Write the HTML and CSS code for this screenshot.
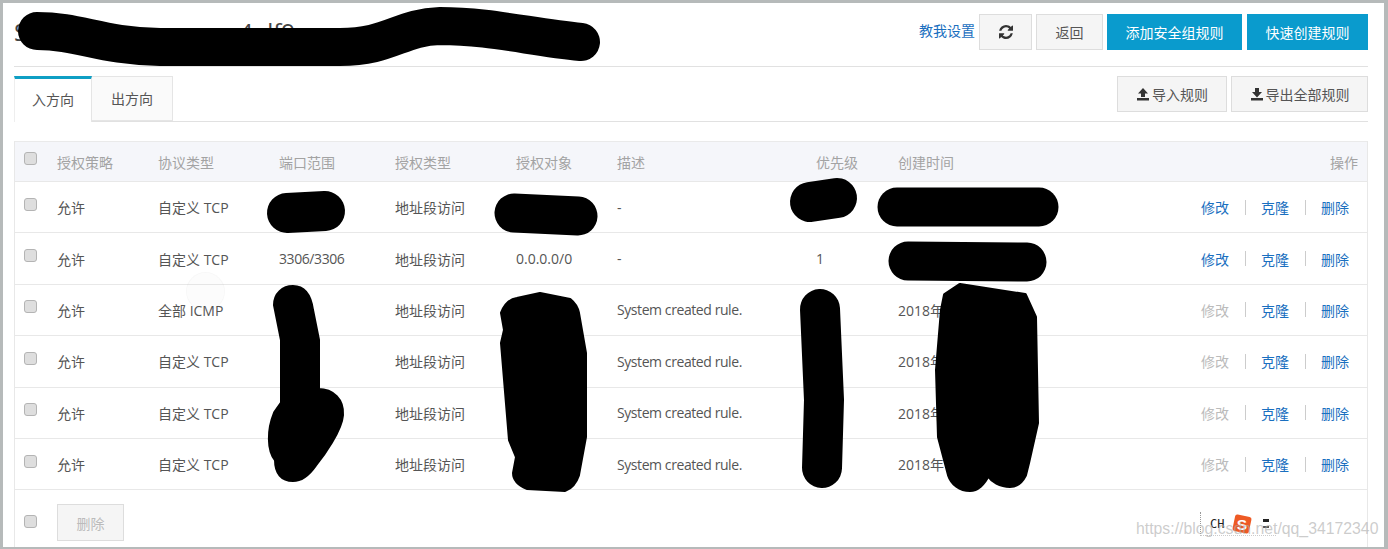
FILE: index.html
```html
<!DOCTYPE html>
<html lang="zh">
<head>
  <meta charset="UTF-8" />
  <title>安全组规则</title>
  <link rel="stylesheet" href="styles.css">
</head>
<body>

  <div class="page">
    <!-- header -->
    <div class="page-header">
      <h1 class="page-title"><span>S</span><span class="title-rest">4 lf9</span></h1>
      <div class="header-actions">
        <a class="link help-link">教我设置</a>
        <button class="btn btn-refresh" aria-label="刷新">
          <svg class="icon-refresh" viewBox="0 0 1536 1536"><path d="M1511 928q0 5-1 7-64 268-268 434.5t-478 166.5q-146 0-282.5-55t-243.5-157l-129 129q-19 19-45 19t-45-19-19-45v-448q0-26 19-45t45-19h448q26 0 45 19t19 45-19 45l-137 137q71 66 161 102t187 36q134 0 250-65t186-179q11-17 53-117 8-23 30-23h192q13 0 22.5 9.5t9.5 22.5zm25-800v448q0 26-19 45t-45 19h-448q-26 0-45-19t-19-45 19-45l138-138q-148-137-349-137-134 0-250 65t-186 179q-11 17-53 117-8 23-30 23h-199q-13 0-22.5-9.5t-9.5-22.5v-7q65-268 270-434.5t480-166.5q146 0 284 55.5t245 156.5l130-129q19-19 45-19t45 19 19 45z"/></svg>
        </button>
        <button class="btn btn-back">返回</button>
        <button class="btn btn-primary btn-add">添加安全组规则</button>
        <button class="btn btn-primary btn-quick">快速创建规则</button>
      </div>
    </div>

    <!-- tabs -->
    <div class="tab-bar">
      <div class="tabs">
        <div class="tab active">入方向</div>
        <div class="tab">出方向</div>
      </div>
      <div class="tab-actions">
        <button class="btn btn-import">
          <svg class="icon-tray" viewBox="0 0 14 14"><path d="M7 1 L12 6.5 H9 V10 H5 V6.5 H2 Z M1 11 H13 V13.5 H1 Z"/></svg>导入规则
        </button>
        <button class="btn btn-export">
          <svg class="icon-tray" viewBox="0 0 14 14"><path d="M5 1 H9 V5 H12 L7 10.5 L2 5 H5 Z M1 11 H13 V13.5 H1 Z"/></svg>导出全部规则
        </button>
      </div>
    </div>

    <!-- rules -->
    <div class="rules">
      <table class="rule-table">
        <colgroup>
          <col class="col-check"><col class="col-policy"><col class="col-proto"><col class="col-port">
          <col class="col-type"><col class="col-target"><col class="col-desc"><col class="col-prio">
          <col class="col-time"><col>
        </colgroup>
        <thead>
          <tr>
            <th><span class="check"></span></th>
            <th>授权策略</th><th>协议类型</th><th>端口范围</th><th>授权类型</th><th>授权对象</th>
            <th>描述</th><th>优先级</th><th>创建时间</th><th class="th-ops">操作</th>
          </tr>
        </thead>
        <tbody>
          <tr>
            <td><span class="check"></span></td>
            <td>允许</td><td>自定义 TCP</td><td></td><td>地址段访问</td><td></td><td>-</td><td></td><td></td>
            <td><div class="ops"><a class="link">修改</a><i class="sep"></i><a class="link">克隆</a><i class="sep"></i><a class="link">删除</a></div></td>
          </tr>
          <tr>
            <td><span class="check"></span></td>
            <td>允许</td><td>自定义 TCP</td><td class="latin">3306/3306</td><td>地址段访问</td><td>0.0.0.0/0</td><td>-</td><td>1</td><td></td>
            <td><div class="ops"><a class="link">修改</a><i class="sep"></i><a class="link">克隆</a><i class="sep"></i><a class="link">删除</a></div></td>
          </tr>
          <tr>
            <td><span class="check"></span></td>
            <td>允许</td><td>全部 ICMP</td><td></td><td>地址段访问</td><td></td><td class="latin">System created rule.</td><td></td><td>2018年</td>
            <td><div class="ops"><a class="link off">修改</a><i class="sep"></i><a class="link">克隆</a><i class="sep"></i><a class="link">删除</a></div></td>
          </tr>
          <tr>
            <td><span class="check"></span></td>
            <td>允许</td><td>自定义 TCP</td><td></td><td>地址段访问</td><td></td><td class="latin">System created rule.</td><td></td><td>2018年</td>
            <td><div class="ops"><a class="link off">修改</a><i class="sep"></i><a class="link">克隆</a><i class="sep"></i><a class="link">删除</a></div></td>
          </tr>
          <tr>
            <td><span class="check"></span></td>
            <td>允许</td><td>自定义 TCP</td><td></td><td>地址段访问</td><td></td><td class="latin">System created rule.</td><td></td><td>2018年</td>
            <td><div class="ops"><a class="link off">修改</a><i class="sep"></i><a class="link">克隆</a><i class="sep"></i><a class="link">删除</a></div></td>
          </tr>
          <tr>
            <td><span class="check"></span></td>
            <td>允许</td><td>自定义 TCP</td><td></td><td>地址段访问</td><td></td><td class="latin">System created rule.</td><td></td><td>2018年</td>
            <td><div class="ops"><a class="link off">修改</a><i class="sep"></i><a class="link">克隆</a><i class="sep"></i><a class="link">删除</a></div></td>
          </tr>
        </tbody>
      </table>
      <div class="rules-footer">
        <span class="check"></span>
        <button class="btn btn-disabled">删除</button>
      </div>
    </div>
  </div>

  <!-- faint click ripple left in the capture -->
  <div class="ripple"></div>

  <!-- black marker over the private values -->
  <svg class="marker" viewBox="0 0 1388 549">
    <g fill="none" stroke="#000" stroke-linecap="round" stroke-linejoin="round">
      <path stroke-width="38" d="M37 31 C80 31 100 46 160 47 L340 47 C390 47 400 27 440 26 C490 26 530 37 581 42"/>
      <path stroke-width="40" d="M287 213 L325 211"/>
      <path stroke-width="39" d="M514 213 L578 216"/>
      <path stroke-width="40" d="M810 202 L837 198"/>
      <path stroke-width="39" d="M897 207 L1039 207"/>
      <path stroke-width="39" d="M908 261 L1027 262"/>
      <path stroke-width="40" d="M820 309 L824 400 L822 468"/>
    </g>
    <g stroke="#000" stroke-width="4" stroke-linejoin="round">
      <path d="M275 305 C275 294 283 287 293 287 C304 287 310 296 312 310 L318 340 L318 390 C333 390 343 400 342 415 C341 430 323 455 315 465 C308 475 300 480 293 480 C282 480 276 473 276 460 C268 450 268 430 275 413 L282 403 L282 340 L278 320 Z"/>
      <path d="M502 313 C505 305 510 300 517 299 L540 294 L570 300 C575 304 577 308 578 313 L585 353 L585 437 L578 475 C575 484 570 488 565 490 L527 488 C520 485 514 480 514 473 L517 457 L510 440 L502 343 L505 330 Z"/>
      <path d="M960 285 L1025 295 L1035 317 L1036 370 L1037 423 L1028 463 L1025 475 C1021 483 1016 486 1010 486 C1000 486 992 481 988 475 C984 484 977 490 970 490 C960 490 952 484 949 475 L939 437 L937 370 L942 310 L945 295 Z"/>
    </g>
  </svg>

  <!-- input method toolbar -->
  <div class="ime">
    <span class="ime-lang">CH</span>
    <svg class="ime-logo" viewBox="0 0 18 18"><rect x="1.5" y="1.5" width="15" height="15" rx="2" transform="rotate(12 9 9)" fill="#ee5a24"/><text class="ime-s" x="9" y="14" text-anchor="middle">S</text></svg>
    <span class="ime-more"></span>
  </div>

  <div class="watermark">https://blog.csdn.net/qq_34172340</div>

</body>
</html>
```

FILE: styles.css
```css
* {
  box-sizing: border-box;
  margin: 0;
  padding: 0;
}

html, body {
  height: 549px;
  overflow: hidden;
}

body {
  font-family: 'Open Sans', 'Noto Sans CJK SC', sans-serif;
  font-size: 14px;
  color: #555;
  background: #fff;
}

.page {
  height: 549px;
  border-style: solid;
  border-color: #b6baba;
  border-width: 3px 4px 2px 3px;
  padding: 11px 16px 0 11px;
}

button {
  font-family: inherit;
}

/* header */

.page-header {
  display: flex;
  justify-content: space-between;
  height: 53px;
  border-bottom: 1px solid #e1e1e1;
}

.page-title {
  font-size: 24px;
  font-weight: 400;
  color: #444;
  padding-top: 1px;
}

.title-rest {
  margin-left: 212px;
  word-spacing: 8px;
}

.header-actions {
  display: flex;
  align-items: flex-start;
}

.help-link {
  margin: 6px 4px 0 0;
}

.btn {
  height: 36px;
  font-size: 14px;
  color: #555;
  background: #f5f5f5;
  border: 1px solid #ddd;
  display: flex;
  align-items: center;
  justify-content: center;
}

.btn-refresh {
  width: 53px;
  margin-right: 4px;
}

.icon-refresh {
  width: 14px;
  height: 14px;
  fill: #333;
}

.btn-back {
  width: 67px;
  margin-right: 4px;
}

.btn-primary {
  color: #fff;
  background: #0a9bcd;
  border-color: #0a9bcd;
}

.btn-add {
  width: 135px;
  margin-right: 5px;
}

.btn-quick {
  width: 121px;
}

/* tabs */

.tab-bar {
  display: flex;
  justify-content: space-between;
  height: 46px;
  margin-top: 9px;
  border-bottom: 1px solid #e1e1e1;
}

.tabs {
  display: flex;
}

.tab {
  width: 81px;
  height: 45px;
  line-height: 44px;
  text-align: center;
  background: #fafafa;
  border: 1px solid #e5e5e5;
  border-left: 0;
}

.tab.active {
  width: 78px;
  height: 46px;
  line-height: 42px;
  background: #fff;
  border-top: 3px solid #0f9fc4;
  border-bottom: 0;
  border-right: 1px solid #e5e5e5;
  border-left: 1px solid #eee;
}

.tab-actions {
  display: flex;
  gap: 4px;
}

.btn-import {
  width: 110px;
}

.btn-export {
  width: 137px;
}

.icon-tray {
  width: 14px;
  height: 14px;
  fill: #333;
  margin-right: 2px;
}

/* rules table */

.rules {
  margin-top: 19px;
  height: 406px;
  border-left: 1px solid #e8e8e8;
  border-right: 1px solid #e8e8e8;
}

.rule-table {
  width: 100%;
  border-collapse: collapse;
  table-layout: fixed;
}

.col-check { width: 42px; }
.col-policy { width: 101px; }
.col-proto { width: 121px; }
.col-port { width: 116px; }
.col-type { width: 121px; }
.col-target { width: 101px; }
.col-desc { width: 199px; }
.col-prio { width: 82px; }
.col-time { width: 292px; }

.rule-table th {
  height: 40px;
  font-weight: 400;
  text-align: left;
  color: #a3a3a3;
  background: #f5f6fa;
  border-top: 1px solid #eaeaea;
  border-bottom: 1px solid #e8e8e8;
}

.rule-table td {
  height: 51.4px;
  white-space: nowrap;
  border-bottom: 1px solid #e8e8e8;
}

.rule-table .latin {
  letter-spacing: -0.42px;
}

.rule-table th:first-child,
.rule-table td:first-child {
  padding-left: 9px;
}

.th-ops {
  text-align: right !important;
  padding-right: 9px;
}

.check {
  display: block;
  width: 13px;
  height: 13px;
  margin-top: -6px;
  background: #dedede;
  border: 1px solid #b4b4b4;
  border-radius: 3px;
}

.ops {
  display: flex;
  justify-content: flex-end;
  align-items: center;
  padding-right: 18px;
}

.link {
  color: #1a6fc0;
}

.link.off {
  color: #bbb;
}

.sep {
  width: 1px;
  height: 15px;
  margin: 0 15px 0 16px;
  background: #ccc;
}

.rules-footer {
  display: flex;
  align-items: center;
  padding: 14px 0 0 9px;
}

.rules-footer .check {
  margin-top: -3px;
}

.btn-disabled {
  width: 67px;
  height: 37px;
  margin-left: 20px;
  color: #bbb;
}

/* things lying over the page */

.ripple {
  position: absolute;
  left: 186px;
  top: 272px;
  width: 39px;
  height: 39px;
  border-radius: 50%;
  background: rgba(0, 0, 0, 0.012);
  border: 1px solid rgba(0, 0, 0, 0.025);
}

.marker {
  position: absolute;
  left: 0;
  top: 0;
  width: 1388px;
  height: 549px;
}

.ime {
  position: absolute;
  left: 1200px;
  top: 512px;
  width: 76px;
  height: 24px;
  display: flex;
  align-items: center;
  border-left: 1px dotted #999;
  border-bottom: 1px dotted #ccc;
}

.ime-lang {
  margin-left: 9px;
  font-family: 'DejaVu Sans Mono', monospace;
  font-size: 12px;
  color: #222;
}

.ime-logo {
  width: 20px;
  height: 20px;
  margin-left: 8px;
}

.ime-s {
  font-family: 'Liberation Sans', sans-serif;
  font-size: 14px;
  font-weight: 700;
  fill: #fff;
}

.ime-more {
  width: 6px;
  height: 9px;
  margin-left: 11px;
  border-top: 3px solid #222;
  border-bottom: 2px solid #555;
}

.watermark {
  position: absolute;
  left: 1136px;
  top: 520px;
  font-family: 'Liberation Sans', sans-serif;
  font-size: 15.8px;
  color: rgba(170, 170, 170, 0.6);
  white-space: nowrap;
}
```
